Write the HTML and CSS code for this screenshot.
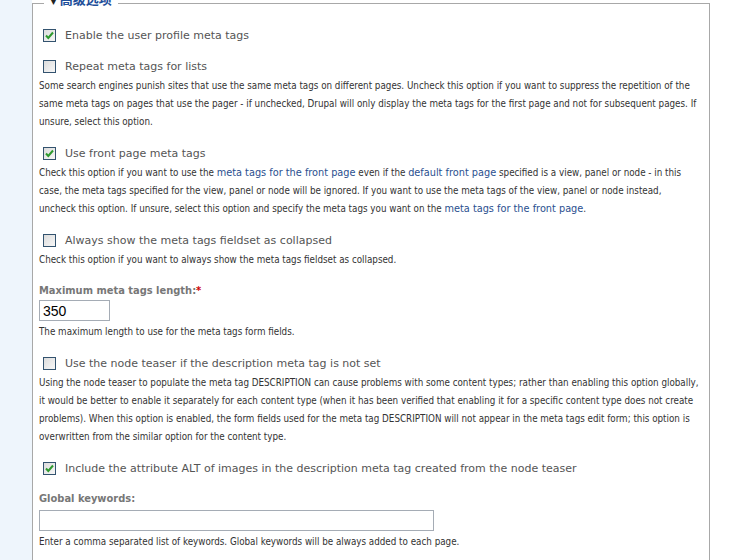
FILE: index.html
```html
<!DOCTYPE html>
<html>
<head>
<meta charset="utf-8">
<link rel="stylesheet" href="styles.css">
</head>
<body>
<div class="page">
  <div class="side"></div>
  <fieldset class="box">
    <legend class="legend"><span class="tri">▼</span> 高级选项</legend>

    <div class="item first">
      <label class="opt"><span class="cb checked"><svg viewBox="0 0 11 11" width="11" height="11"><path d="M2 5.5 L4.3 8 L9 2.5" fill="none" stroke="#2f9a2f" stroke-width="2"/></svg></span>Enable the user profile meta tags</label>
    </div>

    <div class="item">
      <label class="opt"><span class="cb"></span>Repeat meta tags for lists</label>
      <div class="desc">Some search engines punish sites that use the same meta tags on different pages. Uncheck this option if you want to suppress the repetition of the same meta tags on pages that use the pager - if unchecked, Drupal will only display the meta tags for the first page and not for subsequent pages. If unsure, select this option.</div>
    </div>

    <div class="item">
      <label class="opt"><span class="cb checked"><svg viewBox="0 0 11 11" width="11" height="11"><path d="M2 5.5 L4.3 8 L9 2.5" fill="none" stroke="#2f9a2f" stroke-width="2"/></svg></span>Use front page meta tags</label>
      <div class="desc">Check this option if you want to use the <a href="#">meta tags for the front page</a> even if the <a href="#">default front page</a> specified is a view, panel or node - in this case, the meta tags specified for the view, panel or node will be ignored. If you want to use the meta tags of the view, panel or node instead, uncheck this option. If unsure, select this option and specify the meta tags you want on the <a href="#">meta tags for the front page</a>.</div>
    </div>

    <div class="item">
      <label class="opt"><span class="cb"></span>Always show the meta tags fieldset as collapsed</label>
      <div class="desc">Check this option if you want to always show the meta tags fieldset as collapsed.</div>
    </div>

    <div class="item field">
      <div class="flabel">Maximum meta tags length:<span class="req">*</span></div>
      <input class="text short" type="text" value="350">
      <div class="desc">The maximum length to use for the meta tags form fields.</div>
    </div>

    <div class="item">
      <label class="opt"><span class="cb"></span>Use the node teaser if the description meta tag is not set</label>
      <div class="desc">Using the node teaser to populate the meta tag DESCRIPTION can cause problems with some content types; rather than enabling this option globally, it would be better to enable it separately for each content type (when it has been verified that enabling it for a specific content type does not create problems). When this option is enabled, the form fields used for the meta tag DESCRIPTION will not appear in the meta tags edit form; this option is overwritten from the similar option for the content type.</div>
    </div>

    <div class="item">
      <label class="opt"><span class="cb checked"><svg viewBox="0 0 11 11" width="11" height="11"><path d="M2 5.5 L4.3 8 L9 2.5" fill="none" stroke="#2f9a2f" stroke-width="2"/></svg></span>Include the attribute ALT of images in the description meta tag created from the node teaser</label>
    </div>

    <div class="item field">
      <div class="flabel">Global keywords:</div>
      <input class="text long" type="text" value="">
      <div class="desc">Enter a comma separated list of keywords. Global keywords will be always added to each page.</div>
    </div>
  </fieldset>
</div>
</body>
</html>
```

FILE: styles.css
```css
html, body {
  margin: 0;
  padding: 0;
  background: #ffffff;
  overflow: hidden;
}
.page {
  display: flex;
  align-items: flex-start;
  width: 736px;
  height: 560px;
  overflow: hidden;
}
.side {
  width: 32px;
  height: 560px;
  flex: none;
  background: #eef5fc;
}
.box {
  width: 678px;
  box-sizing: border-box;
  margin: -9px 0 0 0;
  padding: 0 0 0 6px;
  border: 1px solid #a8a8a8;
  min-height: 600px;
  font-family: "DejaVu Sans", Verdana, sans-serif;
}
.legend {
  margin-left: 5px;
  padding: 0 6px 6px 6px;
  font-family: "Noto Sans CJK SC", sans-serif;
  font-weight: bold;
  font-size: 13px;
  line-height: 16px;
  color: #1e4f9a;
}
.tri {
  color: #222;
  font-size: 9px;
  font-family: "DejaVu Sans", sans-serif;
}
.item {
  margin-top: 13px;
}
.item.first {
  margin-top: 11px;
}
.item.field {
  margin-top: 13px;
}
.opt {
  display: flex;
  align-items: center;
  height: 18px;
  font-size: 11px;
  color: #555;
}
.cb {
  width: 11px;
  height: 11px;
  margin: 0 9px 0 4px;
  border: 1px solid #33536f;
  background: linear-gradient(135deg, #dcdcdc, #f7f7f7);
  display: flex;
  align-items: center;
  justify-content: center;
  flex: none;
}
.cb svg {
  display: block;
}
.desc {
  margin-top: 2px;
  font-family: "DejaVu Sans Condensed", "DejaVu Sans", sans-serif;
  font-stretch: condensed;
  font-size: 9.75px;
  line-height: 18px;
  color: #333;
  padding-right: 10px;
}
.desc a {
  font-family: "DejaVu Sans", sans-serif;
  font-stretch: normal;
  color: #2a4f8f;
  text-decoration: none;
}
.flabel {
  font-family: "DejaVu Sans Condensed", "DejaVu Sans", sans-serif;
  font-stretch: condensed;
  font-size: 11px;
  font-weight: bold;
  color: #777;
  line-height: 18px;
}
.req {
  color: #cc0000;
}
.text {
  display: block;
  box-sizing: border-box;
  height: 21px;
  margin: 0;
  padding: 1px 3px;
  border: 1px solid #a5acb5;
  font-family: "Liberation Sans", Arial, sans-serif;
  font-size: 14px;
  color: #000;
}
.short { width: 71px; }
.long { width: 395px; margin-top: 2px; }
```
